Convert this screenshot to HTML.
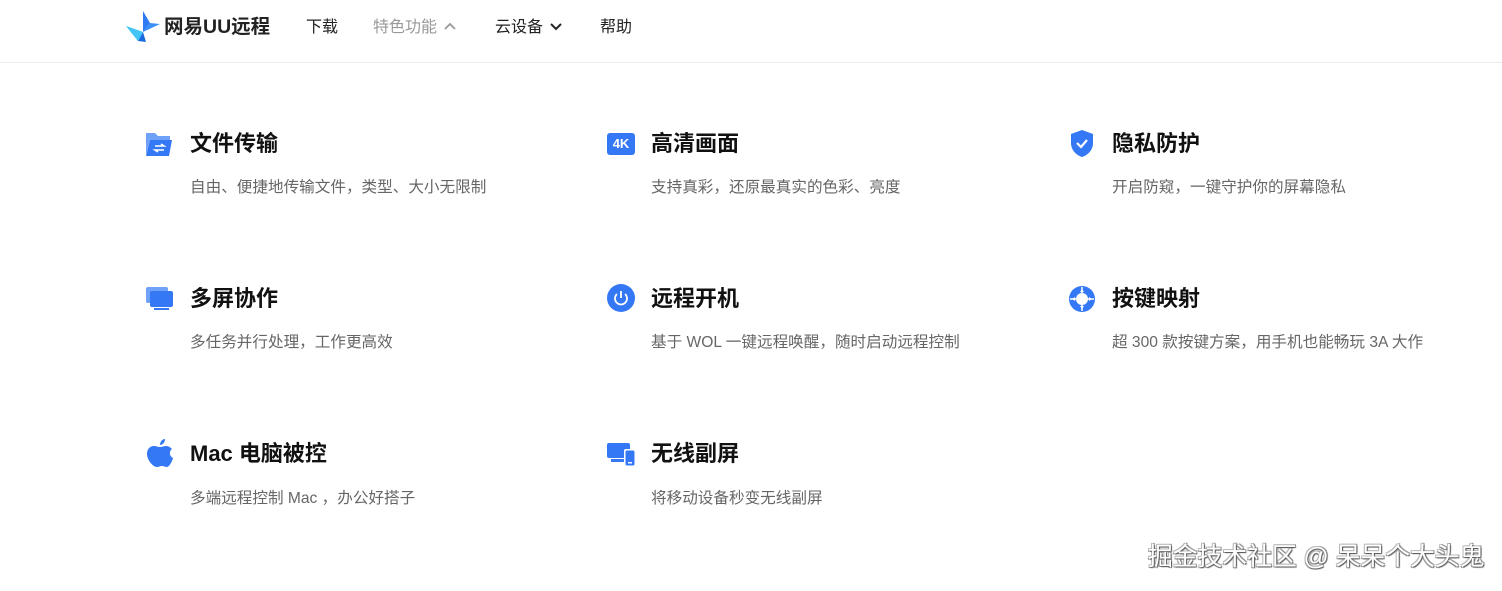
<!DOCTYPE html>
<html><head><meta charset="utf-8"><style>
body{margin:0;width:1502px;height:591px;background:#fff;font-family:"Liberation Sans","Noto Sans CJK SC",sans-serif;position:relative;overflow:hidden}
.hdr{position:absolute;left:0;top:0;width:1502px;height:62px;border-bottom:1px solid #ececec}
.a{position:absolute;white-space:nowrap}
.nav{font-size:16px;color:#222;top:17px;line-height:22px}
.t{font-size:22px;font-weight:bold;color:#111;line-height:30px}
.d{font-size:15.6px;color:#666;line-height:22px}
.ic{position:absolute}
</style></head><body>
<div class="hdr"></div>
<svg class="ic" style="left:126px;top:10px" width="34" height="34" viewBox="0 0 34 34">
<polygon points="17,1 24,13 17,22" fill="#2f7bf5"/><polygon points="0,16 17,22 12,31" fill="#2ad0f0"/><polygon points="17,22 34,14 24,13" fill="#3a8ff7"/><polygon points="12,31 17,22 20,32" fill="#1a6be0"/><polygon points="0,16 12,31 17,22" fill="#43c5f5"/>
</svg>
<div class="a" style="left:164px;top:13px;font-size:19.5px;font-weight:bold;color:#222;line-height:28px">网易UU远程</div>
<div class="a nav" style="left:306px">下载</div>
<div class="a nav" style="left:373px;color:#999">特色功能</div>
<svg class="ic" style="left:444px;top:22px" width="12" height="8" viewBox="0 0 12 8"><path d="M1 7l5-5 5 5" stroke="#999" stroke-width="1.8" fill="none"/></svg>
<div class="a nav" style="left:495px">云设备</div>
<svg class="ic" style="left:550px;top:23px" width="12" height="8" viewBox="0 0 12 8"><path d="M1 1l5 5 5-5" stroke="#222" stroke-width="2" fill="none"/></svg>
<div class="a nav" style="left:600px">帮助</div>

<svg class="ic" style="left:145px;top:131px" width="28" height="26" viewBox="0 0 28 26"><path d="M1 2h9l3 3h12v4H5L1 24z" fill="#6ea1f7"/><path d="M5 9h22l-3 16H1z" fill="#3478f6"/><path d="M10 15h9l-3-2M19 19h-9l3 2" stroke="#fff" stroke-width="1.6" fill="none"/></svg>
<div class="a t" style="left:190px;top:129px">文件传输</div>
<div class="a d" style="left:190px;top:177px">自由、便捷地传输文件，类型、大小无限制</div>
<div class="a" style="left:607px;top:133px;width:28px;height:22px;background:#3478f6;border-radius:3px;color:#fff;font-size:13px;font-weight:bold;text-align:center;line-height:22px">4K</div>
<div class="a t" style="left:651px;top:129px">高清画面</div>
<div class="a d" style="left:651px;top:177px">支持真彩，还原最真实的色彩、亮度</div>
<svg class="ic" style="left:1070px;top:129px" width="24" height="29" viewBox="0 0 24 29"><path d="M12 1L23 5v9c0 7-5 12-11 14C6 26 1 21 1 14V5z" fill="#3478f6"/><path d="M7 14l4 4 6-7" stroke="#fff" stroke-width="2.2" fill="none"/></svg>
<div class="a t" style="left:1112px;top:129px">隐私防护</div>
<div class="a d" style="left:1112px;top:177px">开启防窥，一键守护你的屏幕隐私</div>

<svg class="ic" style="left:146px;top:287px" width="28" height="24" viewBox="0 0 28 24"><rect x="0" y="0" width="22" height="16" rx="2" fill="#6ea1f7"/><rect x="4" y="4" width="23" height="16" rx="2" fill="#3478f6"/><rect x="8" y="21" width="15" height="2" fill="#3478f6"/></svg>
<div class="a t" style="left:190px;top:284px">多屏协作</div>
<div class="a d" style="left:190px;top:332px">多任务并行处理，工作更高效</div>
<svg class="ic" style="left:607px;top:284px" width="28" height="28" viewBox="0 0 28 28"><circle cx="14" cy="14" r="14" fill="#3478f6"/><path d="M10 10a6 6 0 1 0 8 0" stroke="#fff" stroke-width="1.8" fill="none"/><path d="M14 7v7" stroke="#fff" stroke-width="1.8"/></svg>
<div class="a t" style="left:651px;top:284px">远程开机</div>
<div class="a d" style="left:651px;top:332px">基于 WOL 一键远程唤醒，随时启动远程控制</div>
<svg class="ic" style="left:1068px;top:285px" width="28" height="28" viewBox="0 0 28 28"><circle cx="14" cy="14" r="13" fill="#3478f6"/><circle cx="14" cy="14" r="6" fill="#fff"/><path d="M14 2v24M2 14h24" stroke="#fff" stroke-width="1.5"/><path d="M14 4l2 3h-4zM14 24l2-3h-4zM4 14l3 2v-4zM24 14l-3 2v-4z" fill="#fff"/></svg>
<div class="a t" style="left:1112px;top:284px">按键映射</div>
<div class="a d" style="left:1112px;top:332px">超 300 款按键方案，用手机也能畅玩 3A 大作</div>

<svg class="ic" style="left:147px;top:439px" width="26" height="30" viewBox="0 0 26 30"><path d="M18 0c0 4-3 6-5 6 0-3 2-6 5-6z" fill="#3478f6"/><path d="M13 8c2 0 4-1 6-1 3 0 5 2 6 3-3 2-3 7 1 9-1 4-4 9-6 9s-3-1-5-1-3 1-5 1C6 28 0 21 0 15c0-5 3-8 7-8 2 0 4 1 6 1z" fill="#3478f6"/></svg>
<div class="a t" style="left:190px;top:439px">Mac 电脑被控</div>
<div class="a d" style="left:190px;top:488px">多端远程控制 Mac ，办公好搭子</div>
<svg class="ic" style="left:607px;top:443px" width="30" height="24" viewBox="0 0 30 24"><rect x="0" y="0" width="23" height="15" rx="2" fill="#3478f6"/><rect x="4" y="16" width="14" height="3" fill="#3478f6"/><rect x="17" y="6" width="12" height="18" rx="2" fill="#fff"/><rect x="18.5" y="7.5" width="9" height="15" rx="1.5" fill="#3478f6"/><rect x="21" y="19" width="4" height="1.5" fill="#fff"/></svg>
<div class="a t" style="left:651px;top:439px">无线副屏</div>
<div class="a d" style="left:651px;top:488px">将移动设备秒变无线副屏</div>

<div class="a" style="left:1148px;top:543px;font-size:24.8px;color:#fff;line-height:30px;text-shadow:1px 1px 1px #555,-1px -1px 0 #bbb,1px -1px 0 #999,-1px 1px 0 #999">掘金技术社区 @ 呆呆个大头鬼</div>
</body></html>
